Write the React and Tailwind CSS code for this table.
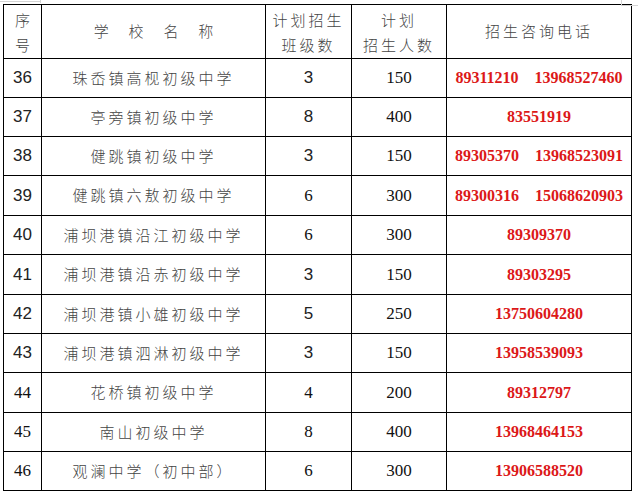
const rows = [
  { no: "36", noSerif: false, name: "珠岙镇高枧初级中学", cls: "3", clsSerif: false, num: "150", tel: ["89311210", "13968527460"], h: "h-[39px]" },
  { no: "37", noSerif: false, name: "亭旁镇初级中学", cls: "8", clsSerif: false, num: "400", tel: ["83551919"], h: "h-[39px]" },
  { no: "38", noSerif: false, name: "健跳镇初级中学", cls: "3", clsSerif: false, num: "150", tel: ["89305370", "13968523091"], h: "h-[39px]" },
  { no: "39", noSerif: false, name: "健跳镇六敖初级中学", cls: "6", clsSerif: true, num: "300", tel: ["89300316", "15068620903"], h: "h-[40px]" },
  { no: "40", noSerif: false, name: "浦坝港镇沿江初级中学", cls: "6", clsSerif: true, num: "300", tel: ["89309370"], h: "h-[39px]" },
  { no: "41", noSerif: false, name: "浦坝港镇沿赤初级中学", cls: "3", clsSerif: false, num: "150", tel: ["89303295"], h: "h-[40px]" },
  { no: "42", noSerif: false, name: "浦坝港镇小雄初级中学", cls: "5", clsSerif: false, num: "250", tel: ["13750604280"], h: "h-[39px]" },
  { no: "43", noSerif: false, name: "浦坝港镇泗淋初级中学", cls: "3", clsSerif: false, num: "150", tel: ["13958539093"], h: "h-[39px]" },
  { no: "44", noSerif: true, name: "花桥镇初级中学", cls: "4", clsSerif: true, num: "200", tel: ["89312797"], h: "h-[40px]" },
  { no: "45", noSerif: true, name: "南山初级中学", cls: "8", clsSerif: true, num: "400", tel: ["13968464153"], h: "h-[39px]" },
  { no: "46", noSerif: true, name: "观澜中学（初中部）", cls: "6", clsSerif: true, num: "300", tel: ["13906588520"], h: "h-[39px]" },
];

const cjk = "font-['Noto_Sans_CJK_SC',sans-serif] text-[15px] font-light text-[#444] tracking-[3px]";
const sans = "font-['Liberation_Sans',Arial,sans-serif] text-[17px] text-[#222]";
const serif = "font-['Liberation_Serif','Times_New_Roman',serif] text-[17px] text-[#111]";
const cell = "flex items-center justify-center border-r border-b border-black";

function App() {
  return (
    <div className="relative min-h-[494px] w-[638px] bg-white pl-[3px] pt-[4px]">
      {/* page corner marks */}
      <div className="absolute left-0 top-[1px] h-px w-[40px] bg-[#d4d4d4]" />
      <div className="absolute left-[40px] top-0 h-[3px] w-px bg-[#d4d4d4]" />
      <div className="absolute left-[621px] top-0 h-[6px] w-px bg-[#d4d4d4]" />
      <div className="absolute left-[621px] top-[5px] h-px w-[17px] bg-[#d4d4d4]" />

      <div className="grid w-[629px] grid-cols-[38px_224px_86px_95px_185px] border-l border-t border-black">
        <div className={`${cell} h-[54px] flex-col leading-[25px] ${cjk} tracking-normal`}>
          <span>序</span>
          <span>号</span>
        </div>
        <div className={`${cell} h-[54px] ${cjk} tracking-normal`}>
          <span className="whitespace-pre">学      校      名      称</span>
        </div>
        <div className={`${cell} h-[54px] flex-col leading-[25px] ${cjk}`}>
          <span>计划招生</span>
          <span>班级数</span>
        </div>
        <div className={`${cell} h-[54px] flex-col leading-[25px] ${cjk}`}>
          <span>计划</span>
          <span>招生人数</span>
        </div>
        <div className={`${cell} h-[54px] ${cjk}`}>
          <span>招生咨询电话</span>
        </div>

        {rows.map((r) => (
          <div key={r.no} className="contents">
            <div className={`${cell} ${r.h} ${r.noSerif ? serif : sans}`}>{r.no}</div>
            <div className={`${cell} ${r.h} ${cjk}`}>{r.name}</div>
            <div className={`${cell} ${r.h} ${r.clsSerif ? serif : sans}`}>{r.cls}</div>
            <div className={`${cell} ${r.h} ${serif}`}>{r.num}</div>
            <div className={`${cell} ${r.h} gap-[16px] font-['Liberation_Serif','Times_New_Roman',serif] text-[16px] font-bold text-[#dc1818]`}>
              {r.tel.map((t) => (
                <span key={t}>{t}</span>
              ))}
            </div>
          </div>
        ))}
      </div>
    </div>
  );
}

export default App;
